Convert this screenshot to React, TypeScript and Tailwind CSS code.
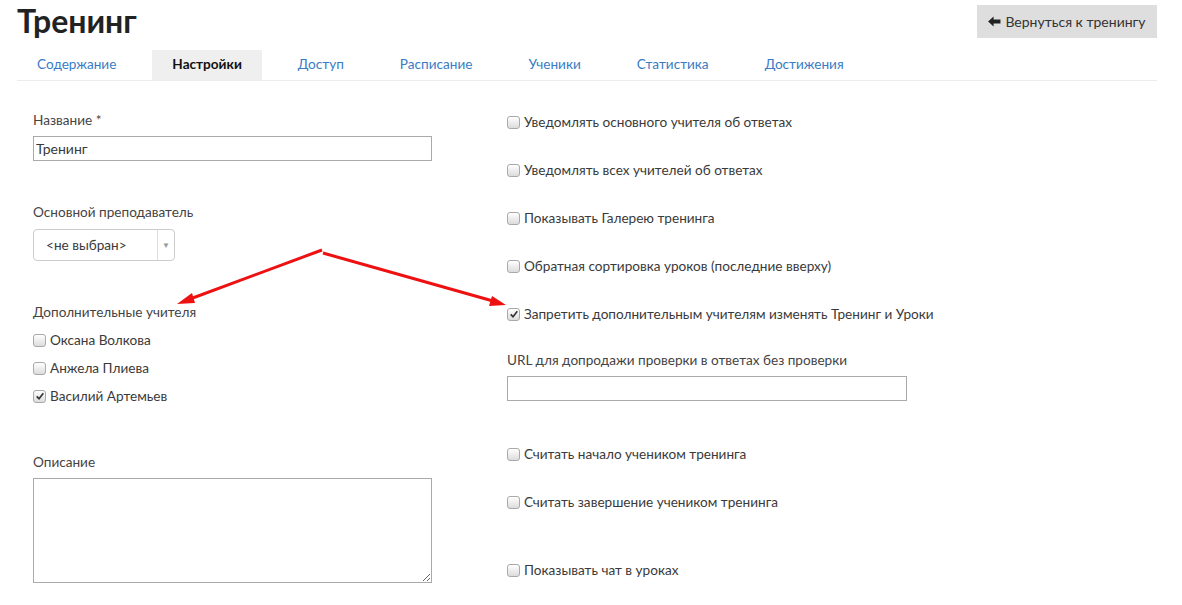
import { ReactNode } from "react";

const tabs = [
  "Содержание",
  "Настройки",
  "Доступ",
  "Расписание",
  "Ученики",
  "Статистика",
  "Достижения",
];

const Box = ({ checked }: { checked?: boolean }) => (
  <span className="relative inline-flex w-[13px] h-[13px] shrink-0 rounded-[3px] border border-[#a9a9a9] bg-gradient-to-b from-white to-[#dcdcdc] items-center justify-center">
    {checked && (
      <svg viewBox="0 0 12 12" className="w-[10px] h-[10px]">
        <path d="M2 6.5 L4.8 9.2 L10 2.8" fill="none" stroke="#333" strokeWidth="2" />
      </svg>
    )}
  </span>
);

const Check = ({ label, checked }: { label: string; checked?: boolean }) => (
  <div className="flex items-center gap-[4px] h-5">
    <Box checked={checked} />
    <span>{label}</span>
  </div>
);

const Label = ({ children }: { children: ReactNode }) => (
  <div className="h-5 leading-5 text-[#444]">{children}</div>
);

const App = () => {
  return (
    <div className="relative w-[1182px] h-[605px] overflow-hidden bg-white text-[13.6px] text-[#3a3a3a] font-['Lato',sans-serif] px-[17px]">
      <div className="flex justify-between items-start w-[1140px]">
        <h1 className="text-[32px] font-bold leading-[40px] mt-[1px] text-[#222]">Тренинг</h1>
        <button className="mt-[5px] h-[33px] w-[180px] bg-[#dedede] text-[14px] text-[#333] flex items-center justify-center gap-1">
          <svg viewBox="0 0 14 12" className="w-[13px] h-[11px]">
            <path d="M0 6 L6 0.5 L6 3.8 L13.5 3.8 L13.5 8.2 L6 8.2 L6 11.5 Z" fill="#222" />
          </svg>
          Вернуться к тренингу
        </button>
      </div>

      <div className="flex gap-4 mt-[9px] w-[1140px] border-b border-[#ececec]">
        {tabs.map((t) => (
          <div
            key={t}
            className={
              t === "Настройки"
                ? "h-[30px] px-5 pb-[2px] flex items-center bg-[#efefef] font-bold text-[#111]"
                : "h-[30px] px-5 pb-[2px] flex items-center text-[#3a7cc4]"
            }
          >
            {t}
          </div>
        ))}
      </div>

      <div className="flex pl-4">
        <div className="w-[474px] pt-[29px]">
          <Label>Название *</Label>
          <input
            className="mt-[6px] w-[399px] h-[25px] border border-[#aaa] px-[2px] text-[14px] outline-none"
            defaultValue="Тренинг"
          />
          <div className="mt-[41px]">
            <Label>Основной преподаватель</Label>
          </div>
          <div className="mt-[7px] w-[142px] h-[32px] border border-[#ccc] rounded-[4px] flex items-center">
            <span className="flex-1 pl-3">&lt;не выбран&gt;</span>
            <span className="w-[17px] h-full border-l border-[#ddd] flex items-center justify-center text-[#999] text-[8px]">
              ▼
            </span>
          </div>
          <div className="mt-[41px]">
            <Label>Дополнительные учителя</Label>
          </div>
          <div className="mt-2 flex flex-col gap-2">
            <Check label="Оксана Волкова" />
            <Check label="Анжела Плиева" />
            <Check label="Василий Артемьев" checked />
          </div>
          <div className="mt-[46px]">
            <Label>Описание</Label>
          </div>
          <textarea className="mt-[6px] block w-[399px] h-[105px] border border-[#aaa] outline-none" />
        </div>

        <div className="pt-[31px]">
          <div className="flex flex-col gap-[28px]">
            <Check label="Уведомлять основного учителя об ответах" />
            <Check label="Уведомлять всех учителей об ответах" />
            <Check label="Показывать Галерею тренинга" />
            <Check label="Обратная сортировка уроков (последние вверху)" />
            <Check label="Запретить дополнительным учителям изменять Тренинг и Уроки" checked />
          </div>
          <div className="mt-[26px]">
            <Label>URL для допродажи проверки в ответах без проверки</Label>
          </div>
          <input className="mt-[6px] w-[400px] h-[25px] border border-[#aaa] outline-none" />
          <div className="mt-[43px] flex flex-col gap-[28px]">
            <Check label="Считать начало учеником тренинга" />
            <Check label="Считать завершение учеником тренинга" />
          </div>
          <div className="mt-[48px]">
            <Check label="Показывать чат в уроках" />
          </div>
        </div>
      </div>

      <svg className="absolute left-0 top-0 pointer-events-none" width="1182" height="605">
        <line x1="322" y1="250" x2="190" y2="299" stroke="#ee1111" strokeWidth="3" />
        <polygon points="177,304 192,293 195,303" fill="#ee1111" />
        <line x1="323" y1="253" x2="493" y2="301" stroke="#ee1111" strokeWidth="3" />
        <polygon points="506,305 492,296 489,306" fill="#ee1111" />
      </svg>
    </div>
  );
};

export default App;
